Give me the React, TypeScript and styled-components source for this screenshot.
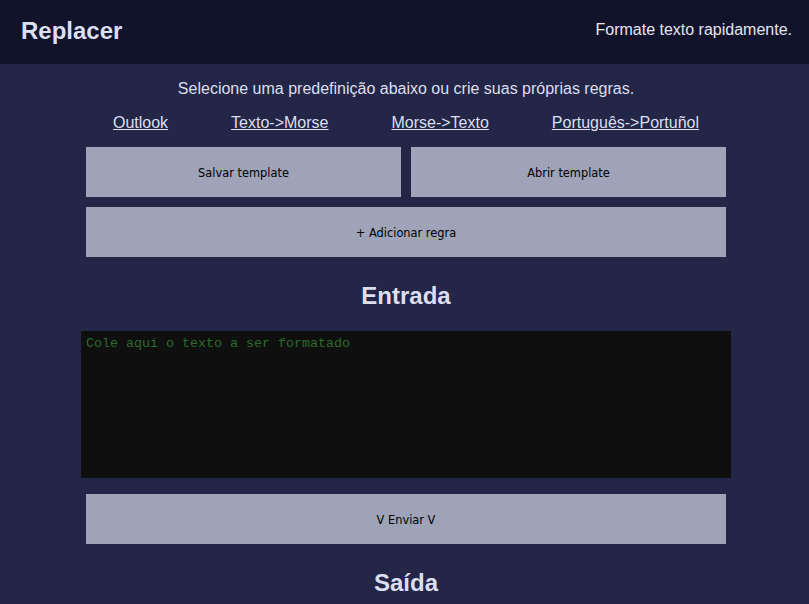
import styled, { createGlobalStyle } from "styled-components";

const GlobalStyle = createGlobalStyle`
    html, body {
        margin: 0;
        padding: 0;
        background: #232646;
        font-family: "Liberation Sans", Arial, sans-serif;
        color: #dcdff0;
        overflow: hidden;
    }
`;

const Header = styled.header`
    height: 64px;
    background: #10132a;
    display: flex;
    align-items: center;
    justify-content: space-between;
    padding: 0 17px 0 21px;
`;

const Logo = styled.h1`
    margin: -3px 0 0;
    font-size: 24px;
    font-weight: bold;
    color: #dcdff0;
`;

const Tagline = styled.span`
    font-size: 16px;
    color: #e4e6f2;
    margin-top: -4px;
`;

const Main = styled.main`
    display: flex;
    flex-direction: column;
    align-items: center;
    padding-left: 3px;
`;

const Intro = styled.p`
    margin: 16px 0 0;
    font-size: 16px;
    line-height: 18px;
`;

const Presets = styled.nav`
    display: flex;
    gap: 63px;
    margin-top: 16px;
`;

const Preset = styled.a`
    font-size: 16px;
    line-height: 18px;
    color: #dcdff0;
    text-decoration: underline;
    cursor: pointer;
`;

const Panel = styled.div`
    width: 640px;
    display: grid;
    grid-template-columns: 1fr 1fr;
    gap: 10px;
    margin-top: 15px;
`;

const Button = styled.button<{ $wide?: boolean }>`
    grid-column: ${(p) => (p.$wide ? "1 / -1" : "auto")};
    height: 50px;
    border: none;
    padding: 2px 0 0;
    background: #9ea3b8;
    color: #000;
    font-family: "DejaVu Sans", sans-serif;
    font-size: 11.4px;
    cursor: pointer;
`;

const Title = styled.h2`
    margin: 0;
    font-size: 24px;
    font-weight: bold;
    color: #dcdff0;
    line-height: 28px;
`;

const Input = styled.textarea`
    width: 650px;
    height: 147px;
    box-sizing: border-box;
    border: none;
    background: #0e0f0e;
    color: #2f7a2f;
    font-family: "Liberation Mono", monospace;
    font-size: 13.33px;
    padding: 5px 5px;
    resize: none;
    outline: none;

    &::placeholder {
        color: #2b6b2b;
    }
`;

const SendRow = styled.div`
    width: 640px;
    display: flex;
    margin-top: 16px;

    & > button {
        flex: 1;
    }
`;

const App = () => {
    const presets = ["Outlook", "Texto->Morse", "Morse->Texto", "Português->Portuñol"];

    return (
        <>
            <GlobalStyle />
            <Header>
                <Logo>Replacer</Logo>
                <Tagline>Formate texto rapidamente.</Tagline>
            </Header>
            <Main>
                <Intro>Selecione uma predefinição abaixo ou crie suas próprias regras.</Intro>
                <Presets>
                    {presets.map((p) => (
                        <Preset key={p}>{p}</Preset>
                    ))}
                </Presets>
                <Panel>
                    <Button>Salvar template</Button>
                    <Button>Abrir template</Button>
                    <Button $wide>+ Adicionar regra</Button>
                </Panel>
                <div style={{ height: 25 }} />
                <Title>Entrada</Title>
                <div style={{ height: 21 }} />
                <Input placeholder="Cole aqui o texto a ser formatado" />
                <SendRow>
                    <Button>V Enviar V</Button>
                </SendRow>
                <div style={{ height: 25 }} />
                <Title>Saída</Title>
            </Main>
        </>
    );
};

export default App;
